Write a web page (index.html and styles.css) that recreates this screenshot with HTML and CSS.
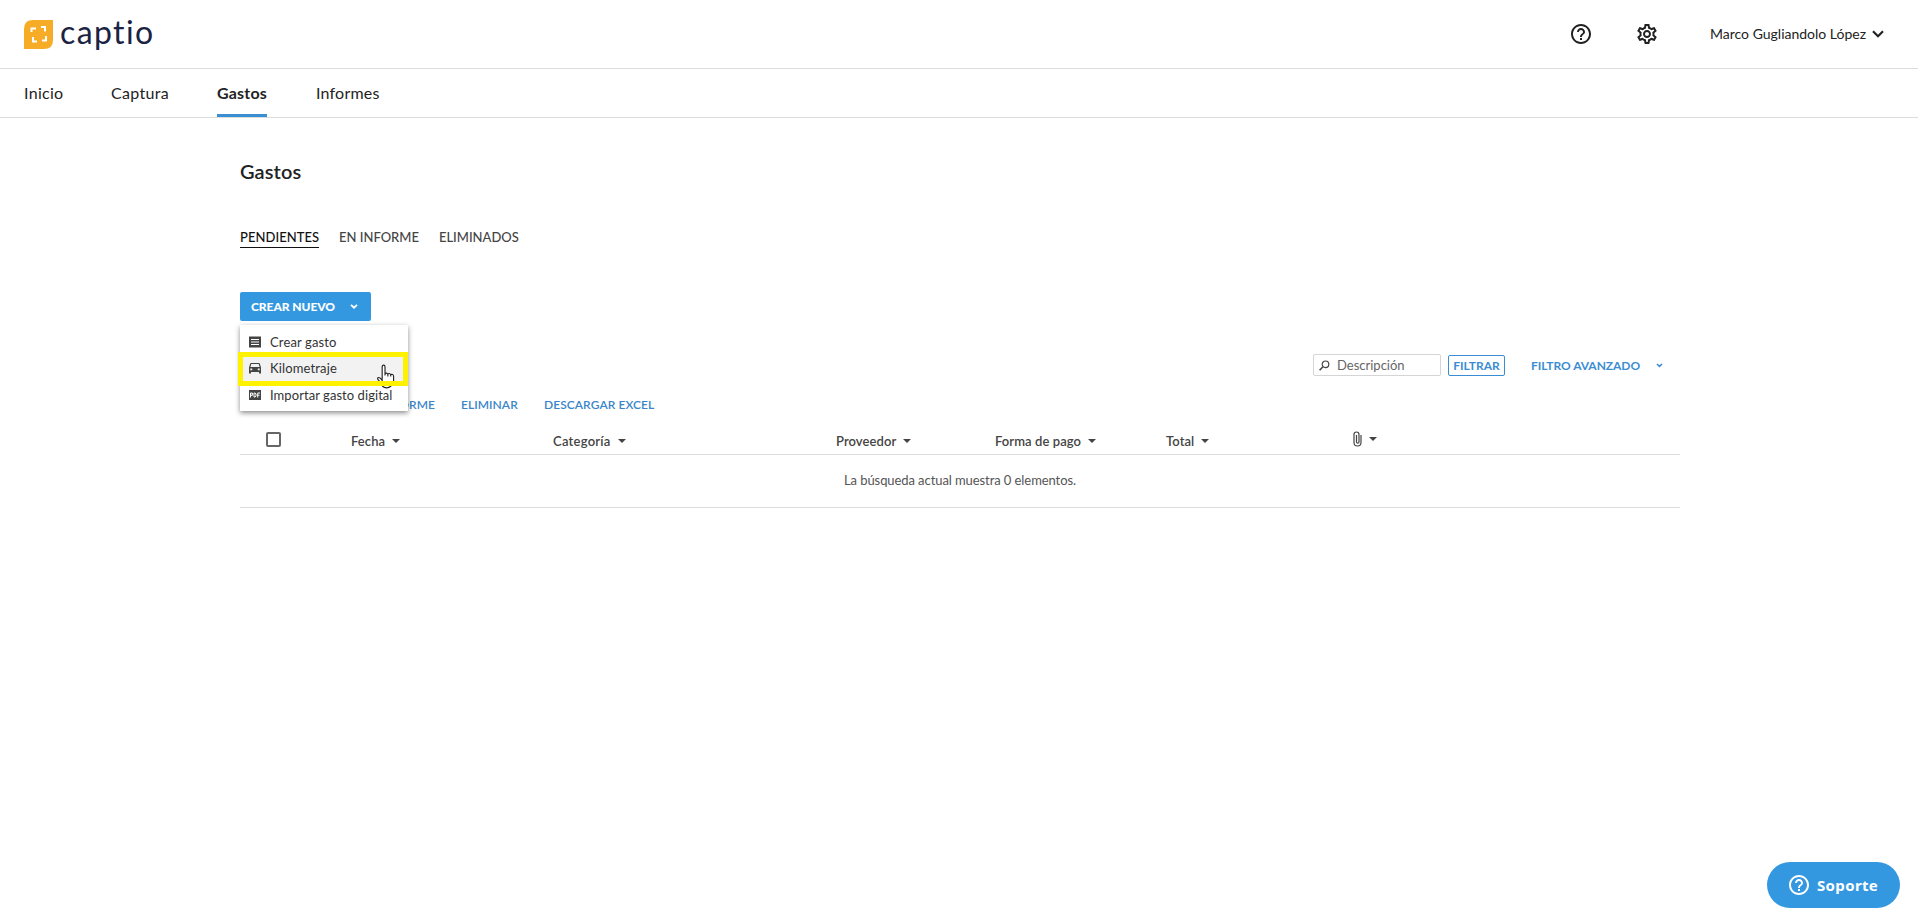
FILE: index.html
```html
<!DOCTYPE html>
<html lang="es">
<head>
<meta charset="utf-8">
<title>Captio - Gastos</title>
<link rel="stylesheet" href="styles.css">
</head>
<body>
<header class="header">
  <div class="logo">
    <svg width="29" height="29" viewBox="0 0 29 29"><path d="M9 0H29V20Q29 29 20 29H0V9Q0 0 9 0Z" fill="#f6ac27"/><path d="M7.500 12V8.500H12M17 7H21V11.500M22 16V20.500H18M13 21.500H9V17" fill="none" stroke="#fff" stroke-width="2"/></svg>
    <span class="wordmark">captio</span>
  </div>
  <div class="account">
    <svg class="help" width="24" height="24" viewBox="0 0 24 24" fill="#222"><path d="M11 18h2v-2h-2v2zm1-16C6.480 2 2 6.480 2 12s4.480 10 10 10 10-4.480 10-10S17.520 2 12 2zm0 18c-4.410 0-8-3.590-8-8s3.590-8 8-8 8 3.590 8 8-3.590 8-8 8zm0-14c-2.210 0-4 1.790-4 4h2c0-1.100.9-2 2-2s2 .9 2 2c0 2-3 1.750-3 5h2c0-2.250 3-2.500 3-5 0-2.210-1.790-4-4-4z"/></svg>
    <svg class="gear" width="24" height="24" viewBox="0 0 24 24" fill="#222"><path d="M19.430 12.980c.04-.32.07-.64.07-.98 0-.34-.03-.66-.07-.98l2.110-1.650c.19-.15.24-.42.12-.64l-2-3.460c-.09-.16-.26-.25-.44-.25-.06 0-.12.010-.17.030l-2.490 1c-.52-.4-1.080-.73-1.690-.98l-.38-2.650C14.460 2.180 14.250 2 14 2h-4c-.25 0-.46.18-.49.42l-.38 2.650c-.61.25-1.170.59-1.690.98l-2.490-1c-.06-.02-.12-.03-.18-.03-.17 0-.34.09-.43.25l-2 3.460c-.13.22-.07.49.12.64l2.110 1.650c-.04.32-.07.65-.07.98 0 .33.030.66.070.98l-2.110 1.650c-.19.15-.24.42-.12.64l2 3.460c.09.16.26.25.44.25.06 0 .12-.01.17-.03l2.490-1c.52.4 1.080.73 1.690.98l.38 2.650c.03.24.24.42.49.42h4c.25 0 .46-.18.49-.42l.38-2.650c.61-.25 1.170-.59 1.690-.98l2.490 1c.06.02.12.03.18.03.17 0 .34-.09.43-.25l2-3.460c.12-.22.07-.49-.12-.64l-2.110-1.650zm-1.980-1.710c.04.31.05.52.05.73 0 .21-.02.43-.05.73l-.14 1.130.89.7 1.080.84-.7 1.210-1.270-.51-1.040-.42-.9.68c-.43.32-.84.56-1.250.73l-1.060.43-.16 1.130-.2 1.350h-1.400l-.19-1.350-.16-1.130-1.060-.43c-.43-.18-.83-.41-1.230-.71l-.91-.7-1.060.43-1.270.51-.7-1.210 1.080-.84.89-.7-.14-1.130c-.03-.31-.05-.54-.05-.74s.02-.43.05-.73l.14-1.130-.89-.7-1.080-.84.7-1.210 1.270.51 1.040.42.9-.68c.43-.32.84-.56 1.250-.73l1.060-.43.16-1.130.2-1.350h1.390l.19 1.350.16 1.130 1.060.43c.43.18.83.41 1.230.71l.91.7 1.060-.43 1.270-.51.7 1.210-1.070.85-.89.7.14 1.130zM12 8c-2.210 0-4 1.790-4 4s1.790 4 4 4 4-1.790 4-4-1.790-4-4-4zm0 6c-1.100 0-2-.9-2-2s.9-2 2-2 2 .9 2 2-.9 2-2 2z"/></svg>
    <span class="user">Marco Gugliandolo López</span>
    <svg width="12" height="8" viewBox="0 0 12 8"><path d="M1 1.200L6 6.200L11 1.200" fill="none" stroke="#222" stroke-width="2.200"/></svg>
  </div>
</header>
<nav class="nav">
  <a class="n1">Inicio</a><a class="n2">Captura</a><a class="n3 current">Gastos</a><a class="n4">Informes</a>
</nav>
<main class="page">
  <h1 class="title">Gastos</h1>
  <div class="tabs"><a class="tab selected">PENDIENTES</a><a class="tab t2">EN INFORME</a><a class="tab t3">ELIMINADOS</a></div>
  <div class="create">
    <button class="create-button"><span>CREAR NUEVO</span><svg width="8" height="5" viewBox="0 0 8 5"><path d="M1 .8L4 3.700L7 .8" fill="none" stroke="#fff" stroke-width="1.800"/></svg></button>
    <div class="menu">
      <div class="item"><svg width="12" height="12" viewBox="0 0 12 12"><path d="M0 .5H12V11.500H0ZM2 3V4H10V3ZM2 5.500V6.500H10V5.500ZM2 8V9H10V8Z" fill="#444" fill-rule="evenodd"/></svg><span class="m1">Crear gasto</span></div>
      <div class="item hover"><svg width="12" height="12" viewBox="0 0 12 12"><path d="M2 1H10Q10.600 1 10.800 1.600L12 5.500V11.500H10V10H2V11.500H0V5.500L1.200 1.600Q1.400 1 2 1ZM2.300 2L1.400 5H10.600L9.700 2ZM1.300 6.500V8.300H3.200V6.500ZM8.800 6.500V8.300H10.700V6.500Z" fill="#444" fill-rule="evenodd"/></svg><span class="m2">Kilometraje</span></div>
      <div class="item"><svg width="12" height="12" viewBox="0 0 12 12"><path d="M0 1H12V11H0Z" fill="#444"/><path d="M1.500 8.500V4H3.400V6.300H1.500M5 4V8H6.100L7 7V5L6.100 4H5M8.700 8.500V4H11M8.700 6.200H10.500" fill="none" stroke="#fff" stroke-width="1"/></svg><span class="m3">Importar gasto digital</span></div>
      <svg class="pointer" width="19" height="26" viewBox="0 0 20 27"><path d="M6.500 17V3Q6.500 1 8 1T9.500 3V10Q11 8.500 12.500 10.500Q14 9 15.500 11Q18.500 10 18.500 13V18Q18 22 16 24Q11 27 7 23L2 16Q1 14 3 14Q4.500 14 6.500 17Z" fill="#fff"/><path d="M7 22L2 16Q1 14 3 14Q4.500 14 6.500 17V3Q6.500 1 8 1T9.500 3V12M9.500 10Q11 8.500 12.500 10.500V13M12.500 10.500Q14 9 15.500 11V13M15.500 11Q18.500 10 18.500 13V18M6.500 23Q11 27 16 23" fill="none" stroke="#222" stroke-width="1.200"/></svg>
      <div class="frame"></div>
    </div>
  </div>
  <div class="filters">
    <label class="search"><svg width="11" height="11" viewBox="0 0 11 11"><circle cx="6.500" cy="4.300" r="3.300" fill="none" stroke="#444" stroke-width="1.200"/><path d="M4 6.700L.6 10.200" stroke="#444" stroke-width="1.600"/></svg><span>Descripción</span></label>
    <button class="filter">FILTRAR</button>
    <a class="advanced">FILTRO AVANZADO</a>
    <svg class="adv-arrow" width="7" height="5" viewBox="0 0 7 5"><path d="M1 1L3.500 3.400L6 1" fill="none" stroke="#3a8dd3" stroke-width="1.500"/></svg>
  </div>
  <div class="actions"><a class="a1">AÑADIR A INFORME</a><a class="a2">ELIMINAR</a><a class="a3">DESCARGAR EXCEL</a></div>
  <div class="table">
    <div class="head">
      <span class="check"></span>
      <span class="col"><b class="h1">Fecha</b><i></i></span>
      <span class="col"><b class="h2">Categoría</b><i></i></span>
      <span class="col"><b class="h3">Proveedor</b><i></i></span>
      <span class="col"><b class="h4">Forma de pago</b><i></i></span>
      <span class="col"><b class="h5">Total</b><i></i></span>
      <span class="col clip"><svg width="9" height="16" viewBox="0 0 9 16"><path d="M8 4V11.500Q8 15 4.500 15T1 11.500V3.500Q1 1 3.500 1T6 3.500V11Q6 12.200 4.800 12.200T3.500 11V4" fill="none" stroke="#444" stroke-width="1.200"/></svg><i></i></span>
    </div>
    <div class="empty"><span>La búsqueda actual muestra 0 elementos.</span></div>
  </div>
</main>
<button class="support"><svg width="24" height="24" viewBox="0 0 24 24" fill="#fff"><path d="M11 18h2v-2h-2v2zm1-16C6.480 2 2 6.480 2 12s4.480 10 10 10 10-4.480 10-10S17.520 2 12 2zm0 18c-4.410 0-8-3.590-8-8s3.590-8 8-8 8 3.590 8 8-3.590 8-8 8zm0-14c-2.210 0-4 1.790-4 4h2c0-1.100.9-2 2-2s2 .9 2 2c0 2-3 1.750-3 5h2c0-2.250 3-2.500 3-5 0-2.210-1.790-4-4-4z"/></svg><span>Soporte</span></button>
</body>
</html>
```
FILE: styles.css
```css
* { box-sizing: border-box; }
body { margin: 0; height: 921px; overflow: hidden; background: #fff; color: #222; font-family: Lato, "Liberation Sans", sans-serif; }
button { border: 0; font-family: inherit; }
svg { display: block; flex: none; }
a, span { white-space: nowrap; }
.header { height: 69px; border-bottom: 1px solid #dcdcdc; display: flex; justify-content: space-between; padding: 0 34px 0 24px; }
.logo { display: flex; gap: 7px; padding-top: 20px; }
.wordmark { font-size: 32px; line-height: 32px; margin-top: -4px; color: #1a2342; letter-spacing: 1.400px; }
.account { display: flex; align-items: center; }
.gear { margin-left: 42px; }
.user { font-size: 14px; margin-left: 51px; margin-right: 8px; margin-top: -1px; width: 154px; }
.nav { height: 49px; border-bottom: 1px solid #dcdcdc; display: flex; gap: 48px; padding-left: 24px; font-size: 16px; line-height: 48px; }
.nav a { height: 48px; border-bottom: 3px solid transparent; letter-spacing: .3px; }
.n1 { width: 39px; }
.n2 { width: 58px; }
.n3 { width: 50px; }
.nav .n4 { margin-left: 1px; letter-spacing: .2px; }
.nav .current { border-color: #3a8fd4; font-weight: 700; letter-spacing: .2px; }
.page { width: 1440px; margin-left: 240px; }
.title { font-size: 20px; line-height: 24px; font-weight: 600; letter-spacing: .1px; margin: 41px 0 0; }
.tabs { display: flex; gap: 20px; margin-top: 45px; font-size: 13px; line-height: 19px; color: #444; font-weight: 500; }
.tab { height: 20px; }
.selected { width: 79px; color: #111; border-bottom: 1px solid #111; letter-spacing: .06px; }
.create { position: relative; margin-top: 44px; width: 168px; height: 62px; }
.create-button { display: flex; align-items: center; justify-content: space-between; width: 131px; height: 29px; padding: 0 13px 0 11px; border-radius: 2px; background: #3498e0; color: #fff; font-size: 12px; font-weight: 900; letter-spacing: -.06px; }
.menu { position: absolute; z-index: 2; left: 0; top: 33px; width: 168px; height: 86px; padding: 4px 0; background: #fff; box-shadow: 0 2px 5px rgba(0,0,0,.45); }
.item { height: 26.300px; display: flex; align-items: center; gap: 9px; padding-left: 9px; font-size: 13px; color: #333; letter-spacing: .06px; }
.m1, .m2 { letter-spacing: .14px; }
.hover { background: #f2f2f2; }
.pointer { position: absolute; left: 136px; top: 39px; }
.frame { position: absolute; left: -2px; top: 27px; width: 170px; height: 34px; border: 5px solid #fff200; }
.filters { height: 23px; display: flex; align-items: center; padding-left: 1073px; }
.search { width: 128px; height: 22px; margin-top: -1px; border: 1px solid #d5d5d5; border-radius: 2px; display: flex; align-items: center; gap: 7px; padding-left: 5px; font-size: 13px; color: #666; }
.filter { margin-left: 7px; width: 57px; height: 21px; padding: 0; background: #fff; border: 1px solid #3a8dd3; border-radius: 2px; font-size: 12px; font-weight: 700; color: #3a8dd3; }
.advanced { margin-left: 26px; width: 109px; font-size: 12px; font-weight: 700; letter-spacing: -.05px; color: #3a8dd3; }
.adv-arrow { margin-left: 16px; }
.actions { display: flex; margin-top: 18px; height: 20px; font-size: 12px; line-height: 20px; font-weight: 600; letter-spacing: .06px; color: #3a85c9; }
.a1 { width: 195px; text-align: right; margin-right: 26px; }
.a2 { width: 57px; margin-right: 26px; }
.table { padding-top: 9px; }
.head { height: 31px; border-bottom: 1px solid #ddd; display: grid; grid-template-columns: 111px 202px 283px 159px 171px 187px 1fr; align-items: center; font-size: 13px; color: #444; }
.check { width: 15px; height: 15px; margin-left: 26px; border: 2px solid #666; border-radius: 2px; }
.col { display: flex; align-items: center; gap: 7px; padding-top: 3px; }
.clip { padding-top: 0; }
.col b { font-weight: 600; letter-spacing: .08px; }
.col .h2 { letter-spacing: .25px; }
.col i { border: 4px solid transparent; border-top-color: #444; border-bottom: 0; }
.empty { height: 53px; border-bottom: 1px solid #ddd; display: flex; justify-content: center; font-size: 13px; line-height: 51px; letter-spacing: -.08px; color: #555; }
.support { position: absolute; left: 1767px; top: 862px; width: 133px; height: 46px; border-radius: 23px; background: #3498e0; color: #fff; display: flex; align-items: center; padding: 0 0 0 20px; gap: 6px; font: 700 15px "Noto Sans", sans-serif; letter-spacing: .35px; }
```
